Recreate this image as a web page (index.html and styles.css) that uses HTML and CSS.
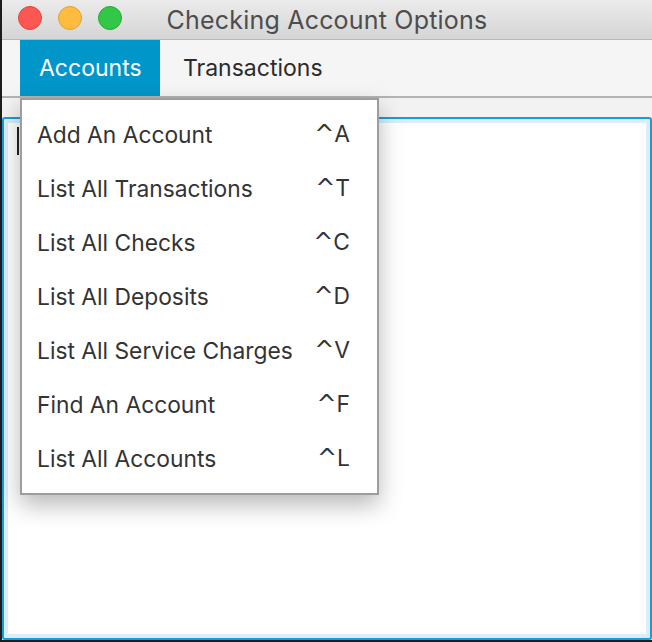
FILE: index.html
```html
<!DOCTYPE html>
<html>
<head>
<meta charset="utf-8">
<title>Checking Account Options</title>
<link rel="stylesheet" href="styles.css">
</head>
<body>
<div class="window">
  <div class="titlebar">
    <div class="lights">
      <span class="light red"></span>
      <span class="light yellow"></span>
      <span class="light green"></span>
    </div>
    <div class="title">Checking Account Options</div>
  </div>
  <div class="menubar">
    <div class="menu-item active">Accounts</div>
    <div class="menu-item">Transactions</div>
  </div>
  <div class="content">
    <div class="textarea">
      <span class="caret"></span>
    </div>
  </div>
  <div class="popup">
    <div class="row"><span>Add An Account</span><span class="key"><span class="hat">^</span>A</span></div>
    <div class="row"><span>List All Transactions</span><span class="key"><span class="hat">^</span>T</span></div>
    <div class="row"><span>List All Checks</span><span class="key"><span class="hat">^</span>C</span></div>
    <div class="row"><span>List All Deposits</span><span class="key"><span class="hat">^</span>D</span></div>
    <div class="row"><span>List All Service Charges</span><span class="key"><span class="hat">^</span>V</span></div>
    <div class="row"><span>Find An Account</span><span class="key"><span class="hat">^</span>F</span></div>
    <div class="row"><span>List All Accounts</span><span class="key"><span class="hat">^</span>L</span></div>
  </div>
</div>
</body>
</html>
```
FILE: styles.css
```css
* { box-sizing: border-box; }
html, body { margin: 0; padding: 0; }
body {
  width: 652px;
  height: 642px;
  background: #1c1c1c;
  font-family: "Inter", "Open Sans", sans-serif;
  overflow: hidden;
}
.window {
  position: relative;
  margin-left: 2px;
  width: 650px;
  height: 640px;
  background: #f2f2f2;
  display: flex;
  flex-direction: column;
}
.titlebar {
  height: 40px;
  flex: none;
  background: linear-gradient(#ebebeb, #d5d5d5);
  border-bottom: 1px solid #b8b8b8;
  display: flex;
  align-items: center;
  position: relative;
}
.lights {
  position: absolute;
  left: 16px;
  top: 6px;
  display: flex;
  gap: 16px;
}
.light {
  width: 24px;
  height: 24px;
  border-radius: 50%;
  display: block;
}
.red { background: #fc5753; border: 1px solid #e0443e; }
.yellow { background: #fdbc40; border: 1px solid #dea236; }
.green { background: #33c748; border: 1px solid #27aa35; }
.title {
  flex: 1;
  text-align: center;
  font-size: 25px;
  color: #4d4d4d;
  letter-spacing: 0.2px;
}
.menubar {
  height: 58px;
  flex: none;
  background: #f5f5f5;
  border-bottom: 2px solid #b3b3b3;
  padding-left: 18px;
  display: flex;
}
.menu-item {
  display: flex;
  align-items: center;
  font-size: 23px;
  color: #2b2b2b;
  padding: 0 19px 0 19px;
}
.menu-item.active {
  background: #0096c9;
  color: #ffffff;
  width: 140px;
}
.menu-item + .menu-item { padding-left: 23px; }
.content {
  flex: 1;
  padding-top: 19px;
  display: flex;
}
.textarea {
  flex: 1;
  position: relative;
  background: #ffffff;
  border: 2px solid #139fd8;
  border-radius: 3px;
  box-shadow: inset 0 0 0 4px #d9eef8;
}
.caret {
  position: absolute;
  left: 13px;
  top: 8px;
  width: 2px;
  height: 28px;
  background: #222;
}
.popup {
  position: absolute;
  left: 18px;
  top: 98px;
  width: 359px;
  height: 397px;
  background: #ffffff;
  border: 2px solid #9d9d9d;
  box-shadow: 0 10px 22px rgba(0, 0, 0, 0.28);
  padding: 7px 27px 8px 15px;
  display: flex;
  flex-direction: column;
}
.row {
  height: 54px;
  display: flex;
  align-items: center;
  justify-content: space-between;
  font-size: 22.8px;
  color: #333333;
}
.hat {
  font-family: "DejaVu Sans", sans-serif;
  font-size: 24px;
  margin-right: 0;
}
```
